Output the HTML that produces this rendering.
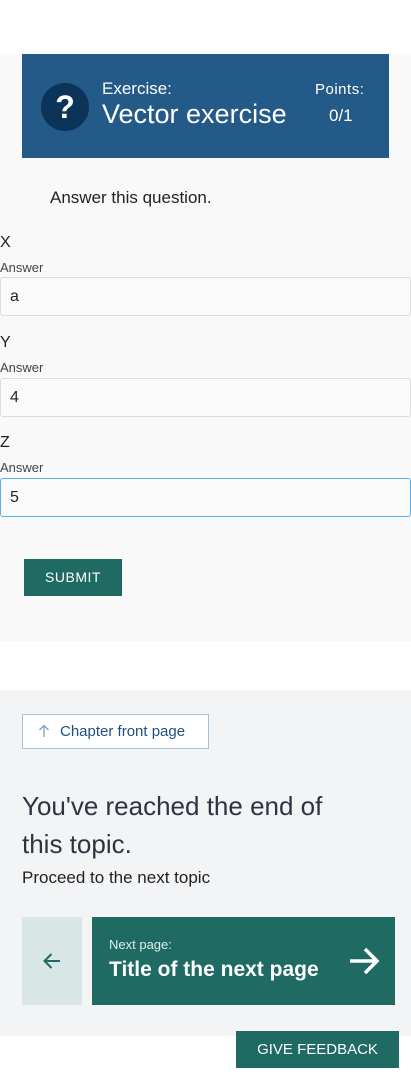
<!DOCTYPE html>
<html><head><meta charset="utf-8"><style>
*{box-sizing:border-box;margin:0;padding:0}
body{width:411px;height:1080px;background:#fff;font-family:"Liberation Sans",sans-serif;position:relative;overflow:hidden;color:#222}
.abs{position:absolute}
.gray1{left:0;top:54px;width:411px;height:587px;background:#f9f9f9}
.banner{left:22px;top:54px;width:367px;height:104px;background:#245a88;color:#fff}
.circ{left:19px;top:29px;width:48px;height:48px;border-radius:50%;background:#0c3358;color:#fff;font-weight:bold;font-size:32px;text-align:center;line-height:48px}
.lbl{font-size:16px;left:0}
.ans{font-size:13px;color:#444;left:0}
.inp{left:0;width:411px;height:39px;border:1px solid #dcdcdc;border-radius:3px;background:#fafafa;font-size:16px;padding:10px 9px;line-height:18px}
.btn{background:#1f6b63;color:#fff;text-align:center}
.gray2{left:0;top:690px;width:411px;height:346px;background:#f3f4f6}
</style></head><body>
<div class="abs gray1"></div>
<div class="abs banner">
 <div class="abs circ">?</div>
 <div class="abs" style="left:80px;top:25px;font-size:17px">Exercise:</div>
 <div class="abs" style="left:80px;top:45px;font-size:27px">Vector exercise</div>
 <div class="abs" style="left:293px;top:27px;font-size:15px;letter-spacing:.5px">Points:</div>
 <div class="abs" style="left:307px;top:52px;font-size:17px">0/1</div>
</div>
<div class="abs" style="left:50px;top:188px;font-size:17px">Answer this question.</div>
<div class="abs lbl" style="top:234px">X</div>
<div class="abs ans" style="top:260px">Answer</div>
<div class="abs inp" style="top:277px">a</div>
<div class="abs lbl" style="top:334px">Y</div>
<div class="abs ans" style="top:360px">Answer</div>
<div class="abs inp" style="top:378px">4</div>
<div class="abs lbl" style="top:434px">Z</div>
<div class="abs ans" style="top:460px">Answer</div>
<div class="abs inp" style="top:478px;border-color:#5ab0ee">5</div>
<div class="abs btn" style="left:24px;top:559px;width:98px;height:37px;line-height:37px;font-size:14px;letter-spacing:.5px">SUBMIT</div>
<div class="abs gray2"></div>
<div class="abs" style="left:22px;top:714px;width:187px;height:35px;border:1px solid #a9c0d6;background:#fff;color:#1f4f82;font-size:15px;line-height:33px;padding-left:37px">Chapter front page</div>
<svg class="abs" style="left:38px;top:724px" width="12" height="14" viewBox="0 0 12 14"><path d="M6 13V1.5M1.5 6L6 1.5L10.5 6" stroke="#7f9fbf" stroke-width="1.3" fill="none"/></svg>
<div class="abs" style="left:22px;top:787px;font-size:26px;line-height:38px;color:#2d3440;width:320px">You've reached the end of this topic.</div>
<div class="abs" style="left:22px;top:868px;font-size:17px;color:#222">Proceed to the next topic</div>
<div class="abs" style="left:22px;top:917px;width:60px;height:88px;background:#d9e6e6"></div>
<svg class="abs" style="left:42px;top:952px" width="20" height="18" viewBox="0 0 20 18"><path d="M18 9H2.5M9.5 2L2.5 9L9.5 16" stroke="#1f6b63" stroke-width="2" fill="none"/></svg>
<div class="abs btn" style="left:92px;top:917px;width:303px;height:88px;text-align:left">
 <div class="abs" style="left:17px;top:20px;font-size:13px;color:#dfeeee">Next page:</div>
 <div class="abs" style="left:17px;top:41px;font-size:21px;font-weight:bold">Title of the next page</div>
 <svg class="abs" style="left:256px;top:29px" width="32" height="30" viewBox="0 0 32 30"><path d="M2 15H29M17 3L29 15L17 27" stroke="#fff" stroke-width="3.5" fill="none"/></svg>
</div>
<div class="abs btn" style="left:236px;top:1031px;width:163px;height:37px;line-height:37px;font-size:15px">GIVE FEEDBACK</div>
</body></html>
